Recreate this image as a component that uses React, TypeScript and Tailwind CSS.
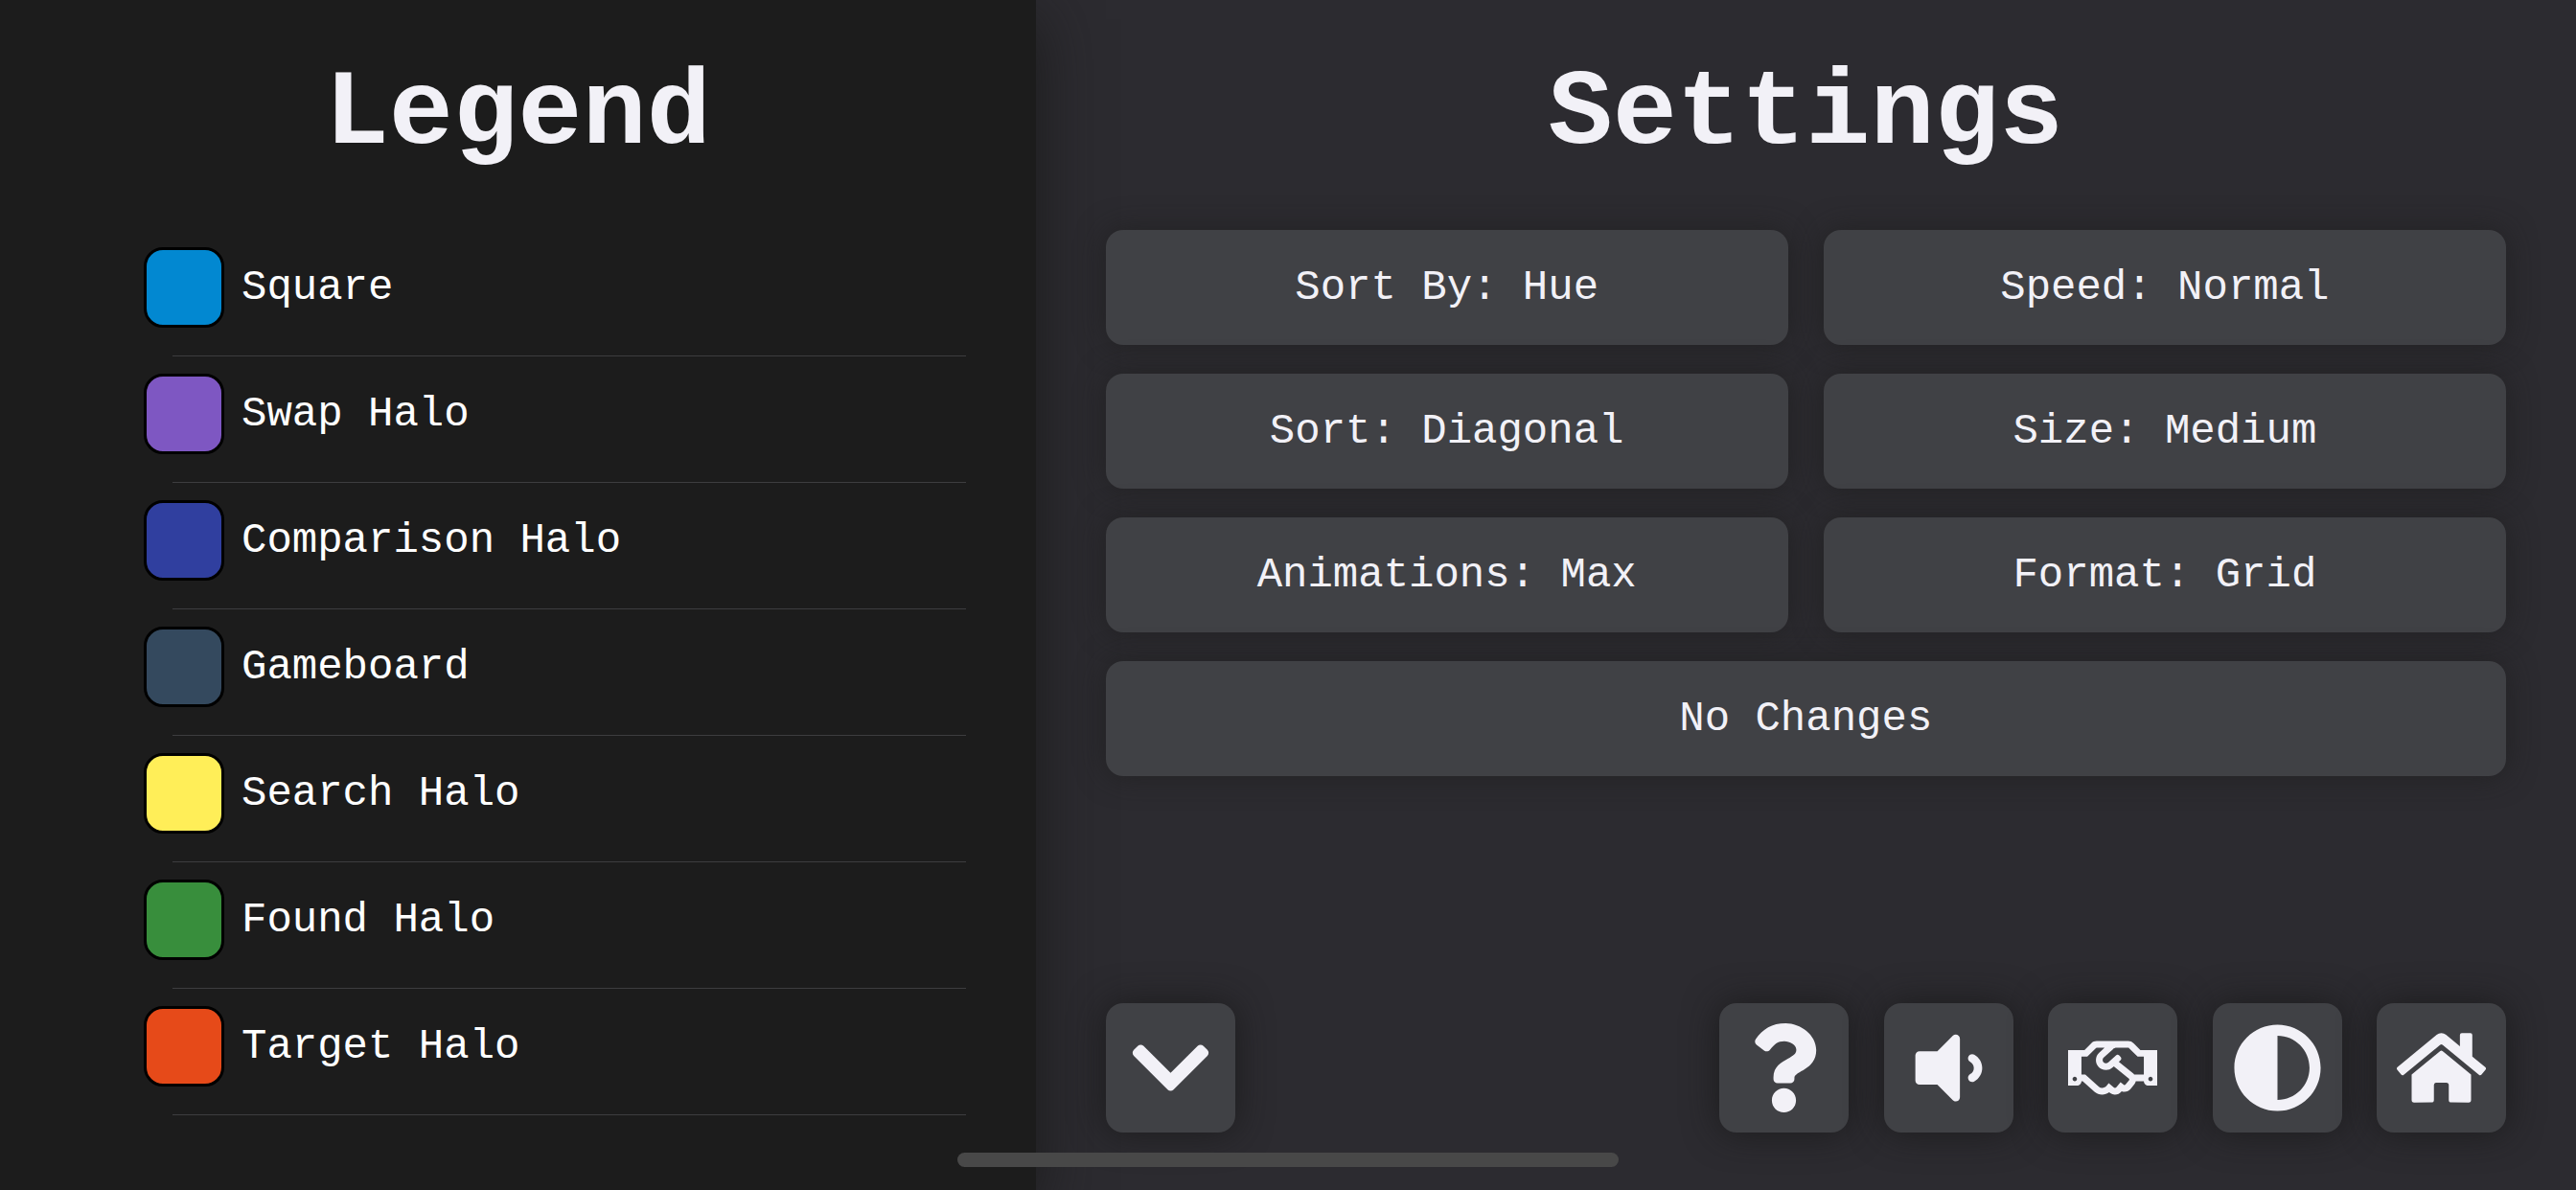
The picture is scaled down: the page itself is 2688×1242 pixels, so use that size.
import React from "react";
import type { IconType } from "react-icons";
import {
  FaAdjust,
  FaChevronDown,
  FaHome,
  FaQuestion,
  FaRegHandshake,
  FaVolumeDown,
} from "react-icons/fa";

const legend = [
  { label: "Square", color: "bg-[#0288d1]" },
  { label: "Swap Halo", color: "bg-[#7e57c2]" },
  { label: "Comparison Halo", color: "bg-[#303f9f]" },
  { label: "Gameboard", color: "bg-[#34495e]" },
  { label: "Search Halo", color: "bg-[#ffee58]" },
  { label: "Found Halo", color: "bg-[#388e3c]" },
  { label: "Target Halo", color: "bg-[#e64a19]" },
];

const settings = [
  "Sort By: Hue",
  "Speed: Normal",
  "Sort: Diagonal",
  "Size: Medium",
  "Animations: Max",
  "Format: Grid",
];

const actions: { label: string; icon: IconType }[] = [
  { label: "Help", icon: FaQuestion },
  { label: "Volume", icon: FaVolumeDown },
  { label: "Credits", icon: FaRegHandshake },
  { label: "Contrast", icon: FaAdjust },
  { label: "Home", icon: FaHome },
];

function Title({ children }: { children: React.ReactNode }) {
  return (
    <h1 className="flex h-60 items-center justify-center text-[112px] leading-none font-bold text-[#f2f1f7]">
      {children}
    </h1>
  );
}

function SettingButton({ label, wide = false }: { label: string; wide?: boolean }) {
  return (
    <button
      type="button"
      className={`flex h-[120px] items-center justify-center rounded-[18px] bg-[#404145] text-[44px] leading-none shadow-[0_0_30px_rgba(30,30,30,0.7)] ${wide ? "col-span-2" : ""}`}
    >
      {label}
    </button>
  );
}

function IconButton({ label, icon: Icon }: { label: string; icon: IconType }) {
  return (
    <button
      type="button"
      aria-label={label}
      className="flex size-[135px] items-center justify-center rounded-[18px] bg-[#404145] shadow-[0_0_36px_rgba(24,24,24,0.8)]"
    >
      <Icon className="size-[93px]" />
    </button>
  );
}

export default function App() {
  return (
    <div className="relative flex min-h-screen bg-[#2c2b30] font-['Liberation_Mono',monospace] text-[#f2f1f7]">
      <aside className="w-[40.2%] shrink-0 bg-[#1c1c1c] shadow-[0_20px_60px_rgba(26,26,26,0.9)]">
        <Title>Legend</Title>
        <ul className="pr-[73px] pl-[150px]">
          {legend.map(({ label, color }) => (
            <li key={label}>
              <div className="flex h-[131px] items-center gap-[18px] pb-[11px]">
                <span className={`size-[84px] shrink-0 rounded-[20px] border-3 border-black ${color}`} />
                <span className="text-[44px] leading-none text-white">{label}</span>
              </div>
              <div className="ml-[30px] h-px bg-[#3d3d3f]" />
            </li>
          ))}
        </ul>
      </aside>

      <main className="flex grow flex-col px-[73px] pb-[60px]">
        <Title>Settings</Title>
        <div className="grid grid-cols-2 gap-x-[37px] gap-y-[30px]">
          {settings.map((label) => (
            <SettingButton key={label} label={label} />
          ))}
          <SettingButton label="No Changes" wide />
        </div>
        <div className="mt-auto flex items-center justify-between">
          <IconButton label="Collapse" icon={FaChevronDown} />
          <div className="flex w-[821px] justify-between">
            {actions.map((action) => (
              <IconButton key={action.label} {...action} />
            ))}
          </div>
        </div>
      </main>

      <div className="absolute bottom-6 left-1/2 h-[15px] w-[690px] -translate-x-1/2 rounded-full bg-[#484848]" />
    </div>
  );
}
